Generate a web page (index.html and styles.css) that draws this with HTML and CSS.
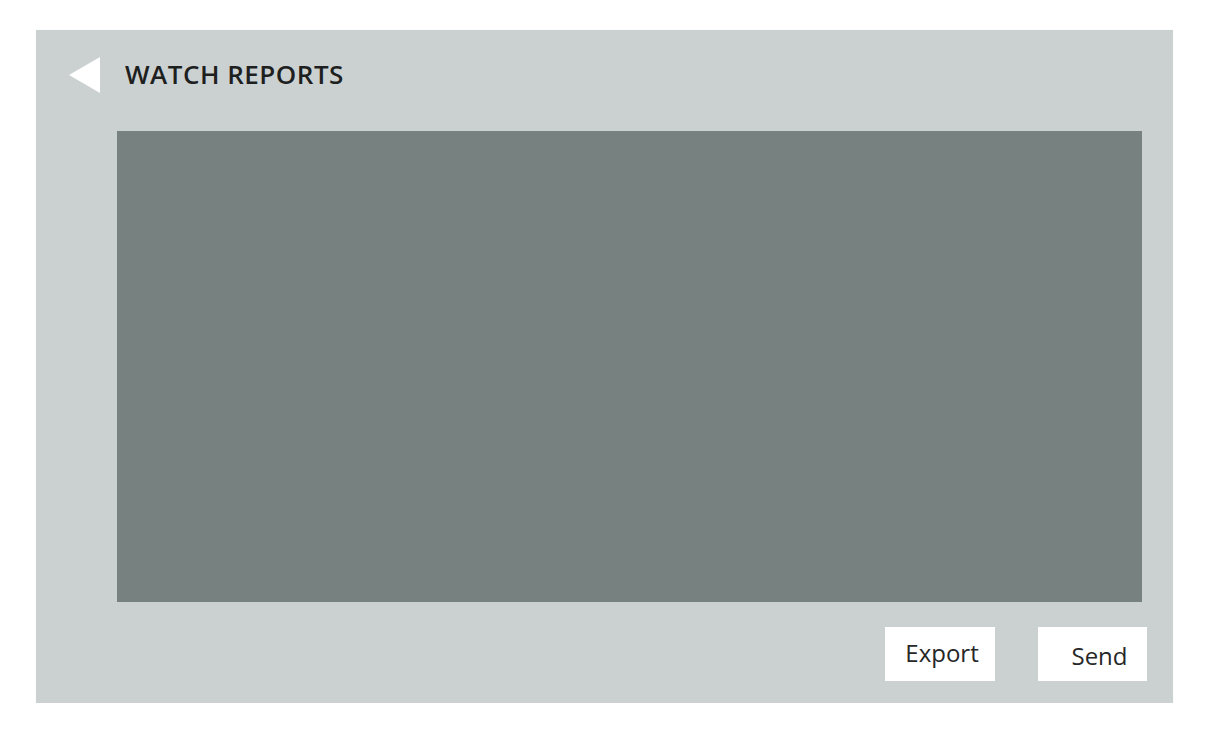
FILE: index.html
```html
<!DOCTYPE html>
<html>
<head>
<meta charset="utf-8">
<link rel="stylesheet" href="styles.css">
</head>
<body>
<div class="panel">
  <div class="header">
    <svg class="back" width="31" height="36" viewBox="0 0 31 36"><polygon points="0,18 31,0 31,36" fill="#ffffff"/></svg>
    <h1 class="title">WATCH REPORTS</h1>
  </div>
  <div class="viewer"></div>
  <div class="actions">
    <button class="btn btn-export">Export</button>
    <button class="btn btn-send">Send</button>
  </div>
</div>
</body>
</html>
```
FILE: styles.css
```css
html, body {
  margin: 0;
  padding: 0;
  background: #ffffff;
}
body {
  padding: 30px 0 0 36px;
  font-family: "Open Sans", "Liberation Sans", sans-serif;
}
.panel {
  width: 1137px;
  height: 673px;
  background: #cbd1d1;
  box-sizing: border-box;
  display: flex;
  flex-direction: column;
  box-shadow: 0 0 1px rgba(0,0,0,0.08);
}
.header {
  display: flex;
  align-items: flex-start;
  height: 101px;
  padding: 27px 0 0 33px;
  box-sizing: border-box;
}
.back {
  display: block;
  margin-right: 25px;
}
.title {
  margin: -1px 0 0 0;
  font-size: 26px;
  font-weight: 600;
  color: #1e1f1f;
  letter-spacing: 0.5px;
}
.viewer {
  margin-left: 81px;
  width: 1025px;
  height: 471px;
  background: #768180;
}
.actions {
  display: flex;
  justify-content: flex-end;
  gap: 43px;
  margin-top: 25px;
  padding-right: 26px;
}
.btn {
  height: 54px;
  border: none;
  background: #ffffff;
  font-family: "Open Sans", "Liberation Sans", sans-serif;
  font-size: 24px;
  color: #262727;
  padding: 0;
  margin: 0;
}
.btn-export {
  width: 110px;
  padding-left: 4px;
  padding-bottom: 3px;
}
.btn-send {
  width: 109px;
  padding-left: 14px;
  padding-top: 2px;
}
```
